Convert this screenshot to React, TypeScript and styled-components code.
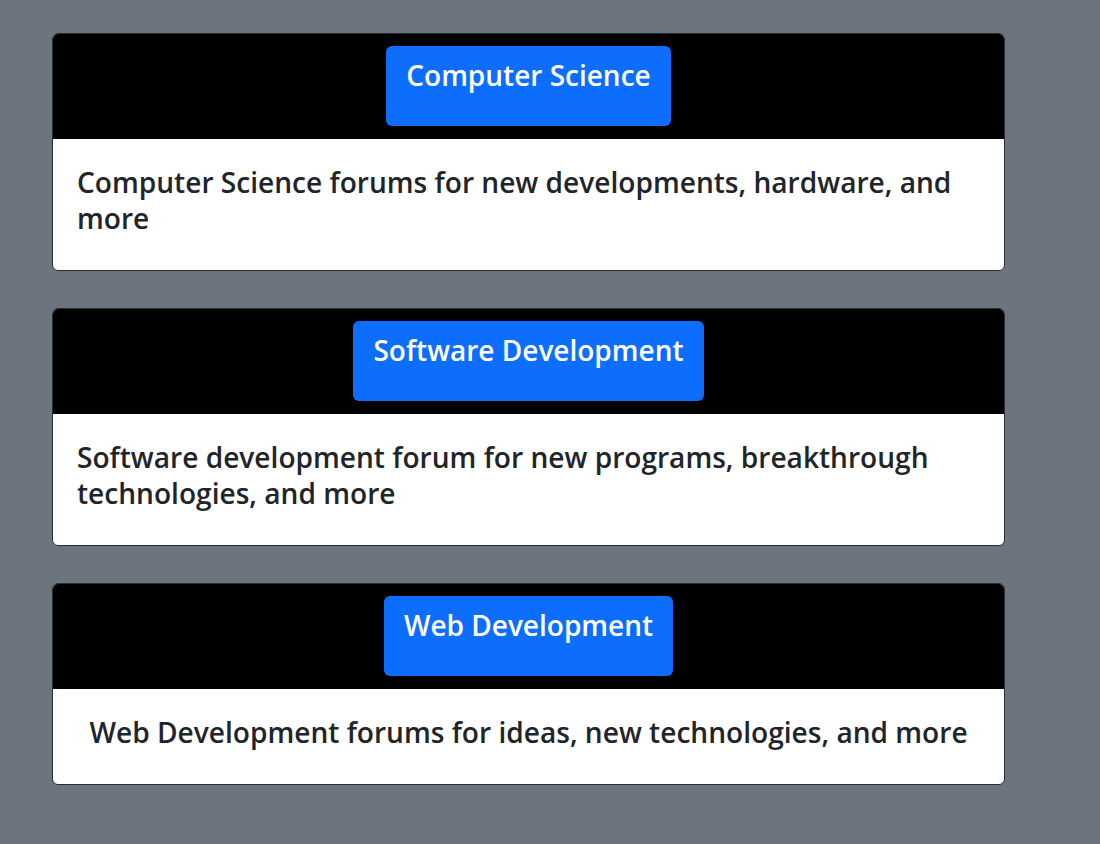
import React from "react";
import styled, { createGlobalStyle } from "styled-components";

const Global = createGlobalStyle`
  html, body {
    margin: 0;
    padding: 0;
    background: #6c757d;
    font-family: "Open Sans", "Noto Sans", Arial, sans-serif;
  }
`;

const Page = styled.main`
  box-sizing: border-box;
  width: 1100px;
  min-height: 844px;
  padding: 33px 95px 40px 52px;
  display: flex;
  flex-direction: column;
  gap: 37px;
`;

const Card = styled.section`
  width: 953px;
  box-sizing: border-box;
  border: 1px solid #2a2d31;
  border-radius: 6px;
  overflow: hidden;
  background: #ffffff;
`;

const Header = styled.header`
  background: #000000;
  padding: 12px 12px 13px;
  display: flex;
  justify-content: center;
`;

const TopicButton = styled.button`
  box-sizing: border-box;
  height: 80px;
  background: #0d6efd;
  color: #ffffff;
  border: none;
  border-radius: 6px;
  padding: 11px 20px 32px;
  font-family: inherit;
  font-size: 28px;
  font-weight: 600;
  line-height: 37px;
  cursor: pointer;
`;

const Body = styled.div`
  padding: 25px 24px 34px;
  display: flex;
  flex-direction: column;
  align-items: center;
`;

const Description = styled.h2`
  margin: 0;
  color: #212529;
  font-size: 28.1px;
  font-weight: 600;
  line-height: 36px;
  text-align: left;
`;

const forums = [
  {
    title: "Computer Science",
    text: "Computer Science forums for new developments, hardware, and more",
  },
  {
    title: "Software Development",
    text: "Software development forum for new programs, breakthrough technologies, and more",
  },
  {
    title: "Web Development",
    text: "Web Development forums for ideas, new technologies, and more",
  },
];

export default function App() {
  return (
    <>
      <Global />
      <Page>
        {forums.map((f) => (
          <Card key={f.title}>
            <Header>
              <TopicButton>{f.title}</TopicButton>
            </Header>
            <Body>
              <Description>{f.text}</Description>
            </Body>
          </Card>
        ))}
      </Page>
    </>
  );
}
